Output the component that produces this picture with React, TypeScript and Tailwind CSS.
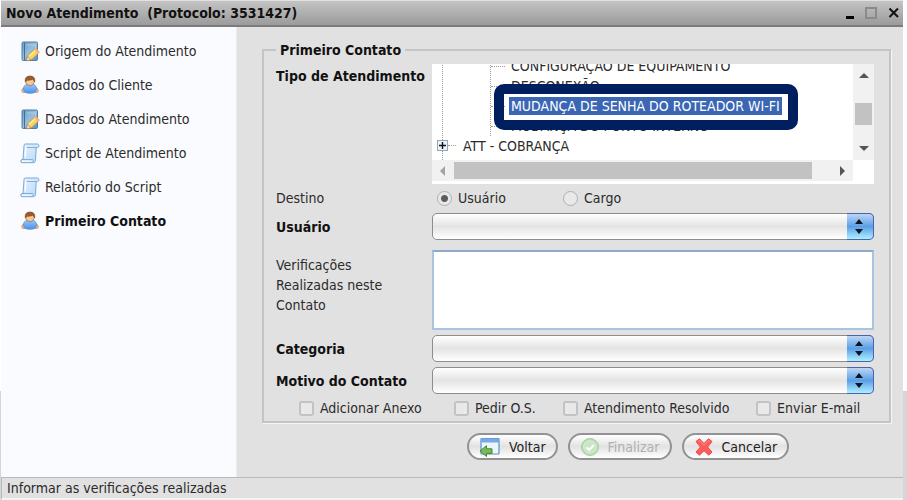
import type { ReactNode } from "react";

function NotePencilIcon() {
  return (
    <svg width="20" height="21" viewBox="0 0 20 21" aria-hidden="true">
      <defs>
        <linearGradient id="book" x1="0" y1="0" x2="1" y2="1">
          <stop offset="0" stopColor="#6a9bc3" />
          <stop offset="0.5" stopColor="#98bfdb" />
          <stop offset="1" stopColor="#5d8fb8" />
        </linearGradient>
      </defs>
      <rect x="2" y="1" width="15.500" height="18.500" rx="1.200" fill="url(#book)" stroke="#4f7fa8" />
      <path d="M4.500 1.500v17.500" stroke="#3f6f99" strokeWidth="1" />
      <path d="M6.500 4h9v6" fill="none" stroke="#b9d4e8" strokeWidth="0.800" />
      <path d="M7.500 15l7.800-7.600 4 3.800-8 7.600-4.600 1z" fill="#fbd45c" stroke="#c8964a" strokeWidth="0.700" />
      <path d="M8.800 15.600l7.600-7.200" stroke="#fff0a8" strokeWidth="1.300" />
      <path d="M14 8.600l1.700-1.700 3.900 3.900-1.700 1.600z" fill="#f2b482" />
      <path d="M7.400 15.200l3.600 3.500-4.500 1.100z" fill="#f3dfbd" stroke="#8c6a45" strokeWidth="0.500" />
    </svg>
  );
}

function PersonIcon() {
  return (
    <svg width="20" height="20" viewBox="0 0 20 20" aria-hidden="true">
      <defs>
        <linearGradient id="shirt" x1="0" y1="0" x2="0" y2="1">
          <stop offset="0" stopColor="#92c8fb" />
          <stop offset="1" stopColor="#4a90f0" />
        </linearGradient>
      </defs>
      <ellipse cx="4" cy="15.500" rx="2.300" ry="2.200" fill="#f1b987" stroke="#c98a58" strokeWidth="0.700" />
      <ellipse cx="16" cy="15.500" rx="2.300" ry="2.200" fill="#f1b987" stroke="#c98a58" strokeWidth="0.700" />
      <path d="M3.500 13.500c0-3 2.500-4.500 6.500-4.500s6.500 1.500 6.500 4.500c0 3.500-2 4.800-6.500 4.800s-6.500-1.300-6.500-4.800z" fill="url(#shirt)" stroke="#4f8ad6" strokeWidth="0.700" />
      <circle cx="10" cy="6.300" r="4.300" fill="#f7c897" stroke="#a8652f" strokeWidth="0.700" />
      <path d="M5.300 7C4.500 2.500 7 1 10 1s5.500 1.500 4.700 6c-.6-1.200-1.200-2-2-2.400C10.500 5.500 7 4.600 5.300 7z" fill="#9a5a2b" stroke="#7a4820" strokeWidth="0.500" />
    </svg>
  );
}

function ScrollIcon() {
  return (
    <svg width="20" height="21" viewBox="0 0 20 21" aria-hidden="true">
      <defs>
        <linearGradient id="paper" x1="0" y1="0" x2="1" y2="1">
          <stop offset="0" stopColor="#e9f4ff" />
          <stop offset="1" stopColor="#b5d8fa" />
        </linearGradient>
      </defs>
      <path d="M5 1h12.500c1.800 0 2 3.500 0 3.500h-1.300L15.500 17.500c-.2 1.500-1 2.200-2 2.200H2c-1.600 0-1.700-3.200 0-3.200h1L4 3c.1-1.300.4-2 1-2z" fill="url(#paper)" stroke="#7ba8d2" />
      <path d="M6 4.500h10M3 16.500h9.500c.8 0 1 1.500.5 3" stroke="#7ba8d2" fill="none" strokeWidth="0.900" />
      <path d="M5.800 3c0 1 .3 1.500 0 3L5 14.500" stroke="#ffffff" fill="none" strokeWidth="1.200" />
      <path d="M2 18.200h9.500" stroke="#ffffff" strokeWidth="1" />
    </svg>
  );
}

function BackIcon() {
  return (
    <svg width="22" height="20" viewBox="0 0 22 20" aria-hidden="true">
      <rect x="2" y="1.500" width="18" height="15.500" rx="0.800" fill="#eef6fd" stroke="#5b8fd2" strokeWidth="1.200" />
      <rect x="2" y="1.500" width="18" height="4" fill="#7ba9e2" />
      <path d="M1 14l6.500-5.300v3.100H13v4.600H7.500v3.100z" fill="#7fb75c" stroke="#3f8b2d" strokeWidth="1" />
    </svg>
  );
}

function CheckIcon() {
  return (
    <svg width="20" height="20" viewBox="0 0 20 20" aria-hidden="true">
      <circle cx="10" cy="10" r="8.500" fill="#b9dcb4" stroke="#a7cfa3" />
      <circle cx="10" cy="10" r="6.300" fill="#c9e5c3" stroke="#dff0dc" strokeWidth="0.800" />
      <path d="M6.500 10.300l2.700 2.700 4.600-5" fill="none" stroke="#fff" strokeWidth="2" />
    </svg>
  );
}

function CrossIcon() {
  return (
    <svg width="20" height="20" viewBox="0 0 20 20" aria-hidden="true">
      <path
        d="M2 4.500L5.500 1.800 10 6.500l4.500-4.700L18 4.500 13.600 10l4.400 5-3.200 3.200L10 13.700l-4.600 4.500L2 15l4.400-5z"
        fill="#fa5c5c"
        stroke="#ee4a4a"
        strokeWidth="1"
        strokeLinejoin="round"
      />
      <path d="M4 4.800l1.600-1.200L10 8.300l4.400-4.700L16 4.700" fill="none" stroke="#ff8f8b" strokeWidth="1" />
    </svg>
  );
}

const steps: { label: string; icon: ReactNode; current?: boolean }[] = [
  { label: "Origem do Atendimento", icon: <NotePencilIcon /> },
  { label: "Dados do Cliente", icon: <PersonIcon /> },
  { label: "Dados do Atendimento", icon: <NotePencilIcon /> },
  { label: "Script de Atendimento", icon: <ScrollIcon /> },
  { label: "Relatório do Script", icon: <ScrollIcon /> },
  { label: "Primeiro Contato", icon: <PersonIcon />, current: true },
];

function TitleBar() {
  return (
    <header className="flex h-[26px] items-center justify-between border-b-2 border-[#7b7b7b] bg-linear-to-b from-[#c4c4c4] to-[#9b9b9b] pr-[3px] pl-[5px]">
      <h1 className="font-bold whitespace-pre text-[#111]">{"Novo Atendimento  (Protocolo: 3531427)"}</h1>
      <div className="flex items-center gap-[11px]">
        <button type="button" aria-label="Minimizar" className="flex h-3 w-2 items-end">
          <span className="h-[3px] w-2 bg-black" />
        </button>
        <button type="button" aria-label="Maximizar" className="size-3 border-2 border-[#8a8a8a]" />
        <button type="button" aria-label="Fechar" className="size-3">
          <svg width="12" height="12" viewBox="0 0 12 12">
            <path d="M1.500 1.500l8.500 8.500M10 1.500L1.500 10" stroke="#111" strokeWidth="2" />
          </svg>
        </button>
      </div>
    </header>
  );
}

function Sidebar() {
  return (
    <nav className="w-[236px] shrink-0 border-r border-[#ececee] bg-[#fafbff] pt-[7px] pl-[19px]">
      <ul>
        {steps.map((s) => (
          <li key={s.label} className="h-[34px]">
            <a
              href="#"
              className={s.current ? "flex h-full items-center gap-[5px] font-bold text-[#111]" : "flex h-full items-center gap-[5px]"}
            >
              {s.icon}
              {s.label}
            </a>
          </li>
        ))}
      </ul>
    </nav>
  );
}

function Tree() {
  return (
    <div className="relative grid h-[120px] grid-cols-[1fr_21px] grid-rows-[96px_21px] overflow-hidden bg-white pb-[3px]">
      <div className="overflow-hidden">
        <ul className="-mt-2 ml-[10px] border-l border-dotted border-[#a09c90] whitespace-nowrap">
          <li className="pl-[47px]">
            <ul className="border-l border-dotted border-[#a09c90]">
              <TreeLeaf>CONFIGURAÇÃO DE EQUIPAMENTO</TreeLeaf>
              <TreeLeaf>DESCONEXÃO</TreeLeaf>
              <TreeLeaf selected>MUDANÇA DE SENHA DO ROTEADOR WI-FI</TreeLeaf>
              <TreeLeaf>MUDANÇA DO PONTO INTERNO</TreeLeaf>
            </ul>
          </li>
          <li className="-ml-[6px] flex h-6 items-start">
            <button type="button" aria-label="Expandir" className="mt-1 grid size-[11px] place-items-center border border-[#8fa8bd] bg-[#eef2f5]">
              <svg width="7" height="7" viewBox="0 0 7 7">
                <path d="M0 3.500h7M3.500 0v7" stroke="#111" strokeWidth="1.400" />
              </svg>
            </button>
            <span className="mt-[9px] mr-[5px] w-2 border-t border-dotted border-[#a09c90]" />
            <span className="h-5 px-[2px] leading-5">ATT - COBRANÇA</span>
          </li>
        </ul>
      </div>
      <div className="flex flex-col items-center bg-[#f1f1f1]">
        <span className="mt-[9px] border-x-[5px] border-b-[5px] border-x-transparent border-b-[#555]" />
        <span className="mt-[25px] h-[22px] w-[17px] bg-[#c2c2c2]" />
        <span className="mt-[21px] border-x-[5px] border-t-[5px] border-x-transparent border-t-[#555]" />
      </div>
      <div className="flex items-center bg-[#f1f1f1] px-2">
        <span className="border-y-[5px] border-r-[5px] border-y-transparent border-r-[#a3a3a3]" />
        <span className="ml-[9px] h-[17px] flex-1 bg-[#c2c2c2]" />
        <span className="ml-7 border-y-[5px] border-l-[5px] border-y-transparent border-l-[#555]" />
      </div>
      <div className="pointer-events-none absolute top-5 left-[62px] h-[46px] w-[304px] rounded-[10px] border-10 border-[#001f5f]" />
    </div>
  );
}

function TreeLeaf({ children, selected }: { children: ReactNode; selected?: boolean }) {
  return (
    <li className="flex h-5 items-center">
      <span className="mr-1 w-[14px] border-t border-dotted border-[#a09c90]" />
      <span className={selected ? "bg-[#3a66b4] px-[2px] leading-[18px] text-white" : "px-[2px] leading-[18px]"}>{children}</span>
    </li>
  );
}

function SelectBox({ id }: { id: string }) {
  return (
    <div className="relative">
      <select
        id={id}
        className="block h-[27px] w-full appearance-none rounded-[5px] border border-[#8d8d8d] bg-linear-to-b from-[#ffffff] via-[#e4e4e4] to-[#ffffff] px-2"
      />
      <span className="pointer-events-none absolute inset-y-0 right-0 flex w-[27px] flex-col items-center justify-center gap-[5px] rounded-r-[5px] border border-l-0 border-[#4a63b0] bg-linear-to-b from-[#bcd6f5] via-[#5b9ee6] to-[#aef0ff] pr-[2px]">
        <span className="border-x-[4px] border-b-[5px] border-x-transparent border-b-[#0c1420]" />
        <span className="border-x-[4px] border-t-[5px] border-x-transparent border-t-[#0c1420]" />
      </span>
    </div>
  );
}

function Check({ label }: { label: string }) {
  return (
    <label className="flex items-center gap-[6px] whitespace-nowrap">
      <input type="checkbox" className="size-[15px] appearance-none rounded-[3px] border-2 border-[#c3c3c3] bg-[#e9e9e9]" />
      {label}
    </label>
  );
}

function Radio({ label, checked }: { label: string; checked?: boolean }) {
  return (
    <label className="flex items-center gap-[6px]">
      <input
        type="radio"
        name="destino"
        defaultChecked={checked}
        className="size-[15px] appearance-none rounded-full border border-[#b0b0b0] bg-[#e9e9e9] checked:bg-[radial-gradient(circle,#5c5c5c_3px,#e9e9e9_4px)]"
      />
      {label}
    </label>
  );
}

function ActionButton({ icon, label, disabled }: { icon: ReactNode; label: string; disabled?: boolean }) {
  return (
    <button
      type="button"
      disabled={disabled}
      className="flex h-[27px] items-center gap-2 rounded-full border-2 border-[#929292] bg-linear-to-b from-[#ffffff] via-[#e2e2e2] to-[#ffffff] px-[10px] text-[#222] disabled:text-[#b0b0b0]"
    >
      {icon}
      <span>{label}</span>
    </button>
  );
}

const row = "grid grid-cols-[156px_1fr]";

export default function App() {
  return (
    <div className="min-h-screen bg-[linear-gradient(#ffffff_391px,#d6d6d6_391px)] pr-1 pl-px font-['DejaVu_Sans_Condensed','Noto_Sans',sans-serif] text-[14px] leading-5 text-[#2b2b2b]">
      <div className="flex min-h-screen flex-col bg-[#e1e1e1] pt-px">
        <TitleBar />
        <div className="flex flex-1">
          <Sidebar />
          <main className="min-w-0 flex-1 pt-[13px] pr-3 pb-4 pl-[25px]">
            <fieldset className="border-2 border-[#c4c4c4] pt-1 pr-[15px] pb-[3px] pl-3 shadow-[1px_1px_0_#f6f6f6]">
              <legend className="px-1 font-bold text-[#111]">Primeiro Contato</legend>
              <div className={row}>
                <span className="pt-[2px] font-bold whitespace-nowrap text-[#111]">Tipo de Atendimento</span>
                <Tree />
              </div>
              <div className={`${row} mt-1`}>
                <span>Destino</span>
                <div className="grid grid-cols-[126px_1fr] pl-[5px]">
                  <Radio label="Usuário" checked />
                  <Radio label="Cargo" />
                </div>
              </div>
              <div className={`${row} mt-[5px] items-center`}>
                <label htmlFor="usuario" className="font-bold text-[#111]">Usuário</label>
                <SelectBox id="usuario" />
              </div>
              <div className={`${row} mt-[10px]`}>
                <label htmlFor="verificacoes" className="w-[120px] pt-[5px]">Verificações Realizadas neste Contato</label>
                <textarea id="verificacoes" className="block h-[80px] w-full resize-none border-2 border-[#a9c4e0] border-t-[#8dabc8] bg-white p-1" />
              </div>
              <div className={`${row} mt-[5px] items-center`}>
                <label htmlFor="categoria" className="font-bold text-[#111]">Categoria</label>
                <SelectBox id="categoria" />
              </div>
              <div className={`${row} mt-[5px] items-center`}>
                <label htmlFor="motivo" className="font-bold text-[#111]">Motivo do Contato</label>
                <SelectBox id="motivo" />
              </div>
              <div className="grid grid-cols-[155px_109px_193px_1fr] pt-1 pl-[23px]">
                <Check label="Adicionar Anexo" />
                <Check label="Pedir O.S." />
                <Check label="Atendimento Resolvido" />
                <Check label="Enviar E-mail" />
              </div>
            </fieldset>
            <div className="mt-[10px] flex gap-[10px] pl-[205px]">
              <ActionButton icon={<BackIcon />} label="Voltar" />
              <ActionButton icon={<CheckIcon />} label="Finalizar" disabled />
              <ActionButton icon={<CrossIcon />} label="Cancelar" />
            </div>
          </main>
        </div>
        <footer className="h-[23px] border-t border-b-2 border-l border-[#b9b9b9] border-b-[#f4f4f4] pl-[5px]">Informar as verificações realizadas</footer>
      </div>
    </div>
  );
}
